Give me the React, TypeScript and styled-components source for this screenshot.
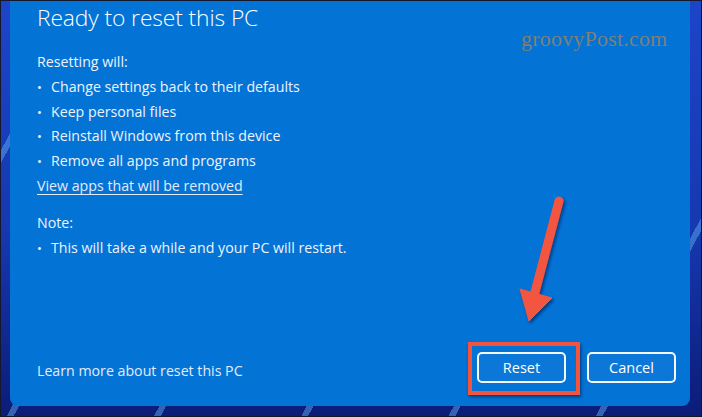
import React from "react";
import styled, { createGlobalStyle } from "styled-components";

const GlobalStyle = createGlobalStyle`
  html, body {
    margin: 0;
    padding: 0;
    background: #0a1450;
  }
  * {
    box-sizing: border-box;
  }
`;

const Screen = styled.div`
  position: relative;
  width: 702px;
  height: 417px;
  overflow: hidden;
  border: 1px solid #14182a;
  padding: 0 11px 10px 9px;
  display: flex;
  background:
    repeating-linear-gradient(
      118deg,
      transparent 0 70px,
      rgba(90, 170, 235, 0.5) 70px 76px,
      transparent 76px 130px
    ),
    linear-gradient(180deg, #1d45c8 0%, #1638b0 55%, #0c1c78 100%);
`;

const Dialog = styled.div`
  flex: 1;
  display: flex;
  flex-direction: column;
  background: #0473d6;
  border-radius: 0 0 8px 8px;
  padding: 1px 14px 23px 27px;
  font-family: "Open Sans", "Noto Sans", sans-serif;
  color: #ffffff;
`;

const Title = styled.h1`
  margin: 0 0 16px;
  font-size: 22.8px;
  font-weight: 300;
  line-height: 32px;
  letter-spacing: -0.1px;
`;

const Label = styled.p`
  margin: 0;
  font-size: 14.2px;
  line-height: 24.8px;
  color: #eef3fb;
`;

const List = styled.ul`
  margin: 0;
  padding: 0;
  list-style: none;
`;

const Item = styled.li`
  position: relative;
  padding-left: 14px;
  font-size: 14.2px;
  line-height: 24.8px;
  color: #eef3fb;

  &::before {
    content: "•";
    position: absolute;
    left: 0;
    font-size: 13px;
  }
`;

const Link = styled.a`
  display: inline-block;
  font-size: 14.2px;
  line-height: 24.8px;
  color: #e2ebf8;
  text-decoration: underline;
  text-underline-offset: 3px;
  cursor: pointer;
`;

const Section = styled.div<{ $gap?: number }>`
  display: flex;
  flex-direction: column;
  align-items: flex-start;
  margin-top: ${(p) => p.$gap ?? 0}px;
`;

const Footer = styled.div`
  margin-top: auto;
  display: flex;
  align-items: center;
  justify-content: space-between;
`;

const FooterLink = styled.span`
  font-size: 14.2px;
  color: #e2ebf8;
  margin-top: 5px;
`;

const Buttons = styled.div`
  display: flex;
  gap: 21px;
`;

const Button = styled.button`
  width: 89px;
  height: 31px;
  border: 2px solid #f4f8fd;
  border-radius: 5px;
  background: #0b78d9;
  color: #ffffff;
  font-family: "Open Sans", "Noto Sans", sans-serif;
  font-size: 14.5px;
  padding: 0;
`;

const Highlight = styled.div`
  position: absolute;
  left: 467px;
  top: 341px;
  width: 112px;
  height: 53px;
  border: 4px solid #f2553f;
  box-shadow: 1px 2px 3px rgba(0, 0, 30, 0.5);
`;

const Watermark = styled.div`
  position: absolute;
  left: 520px;
  top: 25px;
  font-family: "Liberation Serif", serif;
  font-size: 22px;
  color: #7e8078;
  letter-spacing: 0.2px;
`;

const Arrow = styled.svg`
  position: absolute;
  left: 500px;
  top: 180px;
  overflow: visible;
`;

export default function App() {
  return (
    <>
      <GlobalStyle />
      <Screen>
        <Dialog>
          <Title>Ready to reset this PC</Title>
          <Section>
            <Label>Resetting will:</Label>
            <List>
              <Item>Change settings back to their defaults</Item>
              <Item>Keep personal files</Item>
              <Item>Reinstall Windows from this device</Item>
              <Item>Remove all apps and programs</Item>
            </List>
            <Link>View apps that will be removed</Link>
          </Section>
          <Section $gap={12}>
            <Label>Note:</Label>
            <List>
              <Item>This will take a while and your PC will restart.</Item>
            </List>
          </Section>
          <Footer>
            <FooterLink>Learn more about reset this PC</FooterLink>
            <Buttons>
              <Button>Reset</Button>
              <Button>Cancel</Button>
            </Buttons>
          </Footer>
        </Dialog>
        <Watermark>groovyPost.com</Watermark>
        <Highlight />
        <Arrow width="100" height="160" viewBox="0 0 100 160">
          <defs>
            <filter id="sh" x="-50%" y="-50%" width="200%" height="200%">
              <feDropShadow dx="1.5" dy="2" stdDeviation="1.5" floodColor="#001040" floodOpacity="0.6" />
            </filter>
          </defs>
          <g filter="url(#sh)" fill="#f2553f" stroke="#f2553f">
            <line x1="58" y1="20" x2="33" y2="115" strokeWidth="9" strokeLinecap="round" />
            <polygon points="19,108 28,140 51,117" strokeWidth="1" strokeLinejoin="round" />
          </g>
        </Arrow>
      </Screen>
    </>
  );
}
